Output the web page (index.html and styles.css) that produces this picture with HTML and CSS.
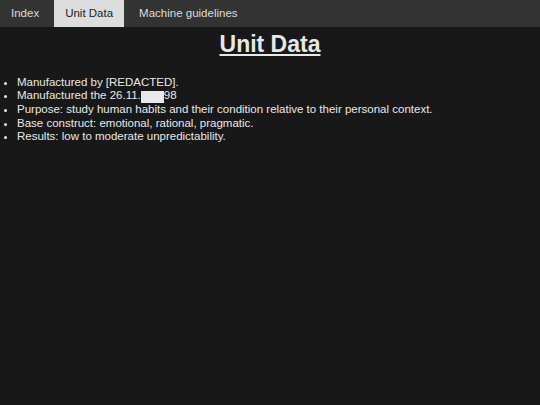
FILE: index.html
```html
<!DOCTYPE html>
<html lang="en">
<head>
  <meta charset="UTF-8">
  <title>Unit Data</title>
  <link rel="stylesheet" href="styles.css">
</head>
<body>
  <nav class="topnav">
    <a href="#">Index</a>
    <a href="#" class="active">Unit Data</a>
    <a href="#">Machine guidelines</a>
  </nav>
  <h1 class="title">Unit Data</h1>
  <ul class="facts">
    <li>Manufactured by [REDACTED].</li>
    <li>Manufactured the 26.11.<span class="redact">&nbsp;</span>98</li>
    <li>Purpose: study human habits and their condition relative to their personal context.</li>
    <li>Base construct: emotional, rational, pragmatic.</li>
    <li>Results: low to moderate unpredictability.</li>
  </ul>
</body>
</html>
```

FILE: styles.css
```css
body {
  margin: 0;
  background: #181818;
  color: #e8e8e8;
  font-family: "Liberation Sans", Arial, sans-serif;
  height: 405px;
}
.topnav {
  display: flex;
  gap: 4px;
  background: #333;
  height: 27px;
}
.topnav a {
  display: block;
  padding: 0 11px;
  line-height: 27px;
  font-size: 11.5px;
  color: #ddd;
  text-decoration: none;
}
.topnav a.active {
  background: #ddd;
  color: #222;
}
.title {
  margin: 4px 0 0;
  text-align: center;
  font-size: 23px;
  line-height: 26px;
  text-decoration: underline;
  color: #e8e8e8;
}
.facts {
  margin: 19px 0 0;
  padding-left: 17px;
  font-size: 11.5px;
  line-height: 13.3px;
}
.redact {
  display: inline-block;
  width: 23px;
  height: 12px;
  vertical-align: -2px;
  background: #e8e8e8;
}
```
